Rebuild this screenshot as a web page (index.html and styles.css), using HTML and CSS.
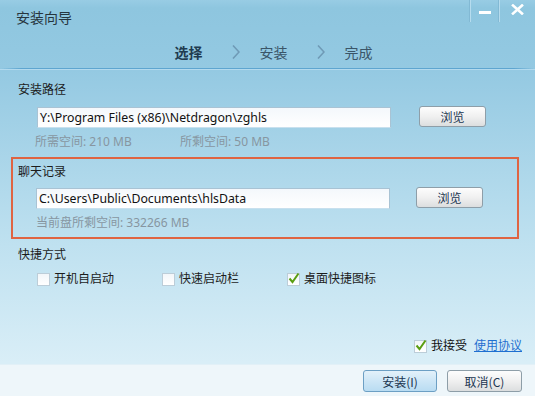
FILE: index.html
```html
<!DOCTYPE html>
<html lang="zh-CN">
<head>
    <meta charset="UTF-8">
    <title>安装向导</title>
    <link rel="stylesheet" href="styles.css">
</head>
<body>
    <div class="window">
        <div class="titlebar">
            <div class="title">安装向导</div>
            <div class="controls">
                <div class="ctl ctl-min"><span class="min-bar"></span></div>
                <div class="ctl ctl-close">
                    <svg width="13" height="11" viewBox="0 0 13 11">
                        <path d="M2 1.5 L11 9.5 M11 1.5 L2 9.5" stroke="#fff" stroke-width="2.6" stroke-linecap="square"/>
                    </svg>
                </div>
            </div>
        </div>
        <div class="steps">
            <span class="step active">选择</span>
            <svg class="chev" width="8" height="14" viewBox="0 0 8 14"><path d="M1 0.5 L7 7 L1 13.5" fill="none" stroke="#6f9ab6" stroke-width="1.6"/></svg>
            <span class="step">安装</span>
            <svg class="chev" width="8" height="14" viewBox="0 0 8 14"><path d="M1 0.5 L7 7 L1 13.5" fill="none" stroke="#6f9ab6" stroke-width="1.6"/></svg>
            <span class="step">完成</span>
        </div>
        <div class="divider"></div>

        <div class="group">
            <div class="label">安装路径</div>
            <div class="field-row">
                <div class="input">Y:\Program Files (x86)\Netdragon\zghls</div>
                <button class="btn">浏览</button>
            </div>
            <div class="info"><span class="info-col">所需空间: 210 MB</span><span>所剩空间: 50 MB</span></div>
        </div>

        <div class="group highlight">
            <div class="label">聊天记录</div>
            <div class="field-row">
                <div class="input">C:\Users\Public\Documents\hlsData</div>
                <button class="btn">浏览</button>
            </div>
            <div class="info">当前盘所剩空间: 332266 MB</div>
        </div>

        <div class="group shortcuts">
            <div class="label">快捷方式</div>
            <div class="check-row">
                <label class="check"><span class="box"></span>开机自启动</label>
                <label class="check"><span class="box"></span>快速启动栏</label>
                <label class="check"><span class="box checked"><svg width="13" height="13" viewBox="0 0 13 13"><path d="M2.5 6.5 L5.5 10 L11.5 1.5" fill="none" stroke="#5a9e12" stroke-width="2"/></svg></span>桌面快捷图标</label>
            </div>
        </div>

        <div class="accept">
            <span class="box checked"><svg width="13" height="13" viewBox="0 0 13 13"><path d="M2.5 6.5 L5.5 10 L11.5 1.5" fill="none" stroke="#5a9e12" stroke-width="2"/></svg></span>
            <span class="accept-text">我接受</span>
            <a class="link" href="#">使用协议</a>
        </div>

        <div class="footer">
            <button class="btn btn-primary">安装(I)</button>
            <button class="btn btn-wide">取消(C)</button>
        </div>
    </div>
</body>
</html>
```

FILE: styles.css
```css
body {
    margin: 0;
    font-family: "Noto Sans", "Noto Sans CJK SC", sans-serif;
    font-size: 12px;
    color: #1e2a32;
}
.window {
    width: 535px;
    height: 396px;
    display: flex;
    flex-direction: column;
    background: linear-gradient(#98cce4 0, #8ec6df 8px, #94c9e2 70px, #bfe1f0 245px, #d9eef7 362px);
    overflow: hidden;
}
.titlebar {
    height: 36px;
    display: flex;
    justify-content: space-between;
    align-items: flex-start;
}
.title {
    padding-left: 16px;
    line-height: 36px;
    font-size: 14px;
    color: #27353e;
}
.controls {
    display: flex;
}
.ctl {
    height: 22px;
    display: flex;
    align-items: center;
    justify-content: center;
    border-left: 1px solid #b6dcee;
    box-shadow: -1px 0 0 #82b9d4;
}
.ctl-min {
    width: 28px;
}
.ctl-close {
    width: 36px;
    align-items: flex-start;
    padding-top: 4px;
    box-sizing: border-box;
}
.min-bar {
    width: 12px;
    height: 3px;
    background: #fff;
    margin-top: 3px;
}
.steps {
    height: 31px;
    display: flex;
    align-items: center;
    justify-content: center;
    padding-left: 12px;
    padding-bottom: 1px;
}
.step {
    font-size: 14px;
    color: #3a5568;
}
.step.active {
    color: #1f3b50;
    font-weight: bold;
}
.chev {
    margin: 0 20px 0 29px;
}
.divider {
    height: 1px;
    background: linear-gradient(to right, rgba(94, 165, 208, 0), #5ea5d0 4%, #5ea5d0 96%, rgba(94, 165, 208, 0));
    border-bottom: 1px solid #b3daee;
}
.group {
    padding-left: 18px;
}
.label {
    line-height: 16px;
    margin-top: 12px;
    color: #1c1c1c;
}
.field-row {
    display: flex;
    align-items: flex-start;
    margin-top: 8px;
    padding-left: 19px;
}
.input {
    width: 350px;
    height: 19px;
    margin-top: 1px;
    padding-left: 2px;
    border: 1px solid #a9c3d4;
    border-bottom-color: #c8e0ee;
    background: linear-gradient(#f4f8fc, #fff);
    line-height: 19px;
    font-size: 12.3px;
    color: #111;
    white-space: nowrap;
    overflow: hidden;
}
.btn {
    width: 67px;
    height: 21px;
    margin-left: 28px;
    padding: 0;
    border: 1px solid #8e9ea8;
    border-radius: 3px;
    background: linear-gradient(#fdfdfd, #f0f0f0 50%, #dcdedf);
    font-family: "Noto Sans CJK SC", sans-serif;
    font-size: 12px;
    color: #1b3550;
}
.info {
    margin-top: 6px;
    line-height: 16px;
    padding-left: 17px;
    color: #8796a1;
}
.info-col {
    display: inline-block;
    width: 145px;
}
.highlight {
    margin: 7px 16px 0 11px;
    padding: 0 0 6px 5px;
    border: 2px solid #df6442;
}
.highlight .label {
    margin-top: 5px;
}
.highlight .field-row {
    margin-top: 7px;
    padding-left: 18px;
}
.highlight .btn {
    margin-left: 26px;
}
.highlight .info {
    padding-left: 18px;
}
.shortcuts .label {
    margin-top: 8px;
}
.check-row {
    display: flex;
    margin-top: 8px;
    padding-left: 19px;
    line-height: 16px;
}
.check {
    width: 125px;
    display: flex;
    align-items: center;
    color: #1c1c1c;
}
.box {
    width: 11px;
    height: 11px;
    margin-right: 4px;
    border: 1px solid #bccdd8;
    background: linear-gradient(#f2f6f9, #fff);
    position: relative;
    flex: none;
}
.box svg {
    position: absolute;
    left: -1px;
    top: -2px;
}
.accept {
    margin-top: auto;
    margin-bottom: 10px;
    display: flex;
    justify-content: flex-end;
    align-items: center;
    padding-right: 13px;
    line-height: 16px;
}
.accept-text {
    color: #111;
    margin-right: 7px;
}
.link {
    color: #1f6fd0;
    text-decoration: underline;
}
.footer {
    height: 32px;
    border-top: 1px solid #e2f0f7;
    background: #eef6fa;
    display: flex;
    justify-content: flex-end;
    align-items: flex-start;
    padding: 5px 13px 0 0;
    box-sizing: border-box;
}
.footer .btn {
    height: 22px;
    width: 74px;
    margin-left: 10px;
}
.footer .btn-wide {
    width: 75px;
}
.btn-primary {
    border-color: #6c9fc4;
    background: linear-gradient(#e3f1fa, #cde6f6 50%, #b9dcf2);
}
```
